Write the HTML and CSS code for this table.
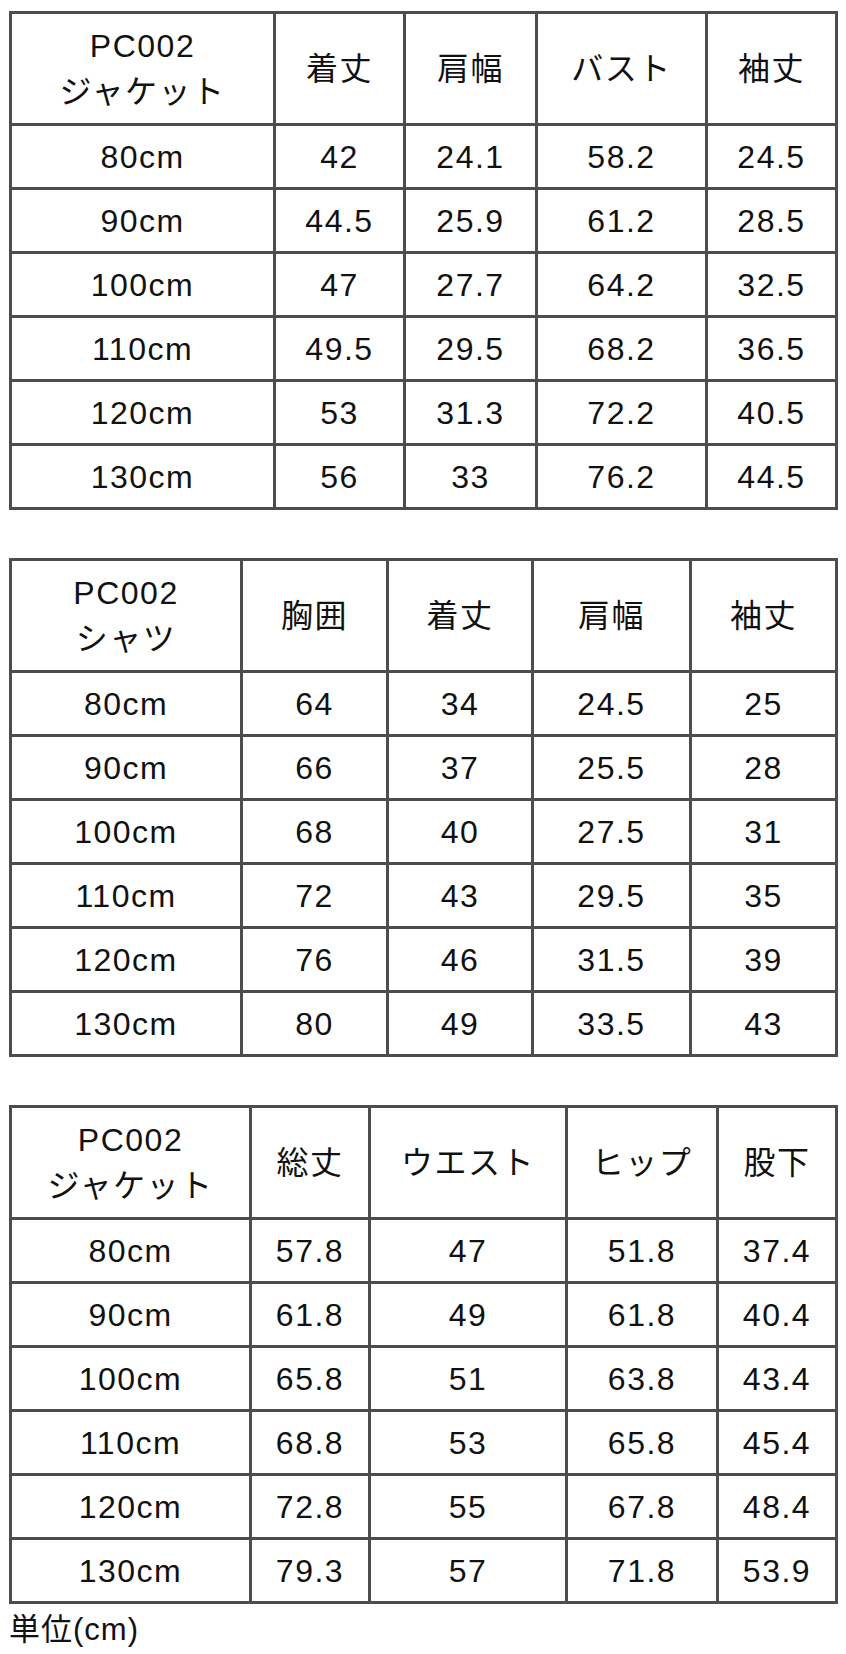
FILE: index.html
```html
<!DOCTYPE html>
<html lang="ja">
<head>
<meta charset="utf-8">
<title>PC002 サイズ表</title>
<link rel="stylesheet" href="styles.css">
</head>
<body>
<div class="page">
  <table class="size t1">
    <tr class="head"><th class="w1">PC002<br>ジャケット</th><th class="w2">着丈</th><th class="w3">肩幅</th><th class="w4">バスト</th><th class="w5">袖丈</th></tr>
    <tr><td>80cm</td><td>42</td><td>24.1</td><td>58.2</td><td>24.5</td></tr>
    <tr><td>90cm</td><td>44.5</td><td>25.9</td><td>61.2</td><td>28.5</td></tr>
    <tr><td>100cm</td><td>47</td><td>27.7</td><td>64.2</td><td>32.5</td></tr>
    <tr><td>110cm</td><td>49.5</td><td>29.5</td><td>68.2</td><td>36.5</td></tr>
    <tr><td>120cm</td><td>53</td><td>31.3</td><td>72.2</td><td>40.5</td></tr>
    <tr><td>130cm</td><td>56</td><td>33</td><td>76.2</td><td>44.5</td></tr>
  </table>

  <table class="size t2">
    <tr class="head"><th class="w1">PC002<br>シャツ</th><th class="w2">胸囲</th><th class="w3">着丈</th><th class="w4">肩幅</th><th class="w5">袖丈</th></tr>
    <tr><td>80cm</td><td>64</td><td>34</td><td>24.5</td><td>25</td></tr>
    <tr><td>90cm</td><td>66</td><td>37</td><td>25.5</td><td>28</td></tr>
    <tr><td>100cm</td><td>68</td><td>40</td><td>27.5</td><td>31</td></tr>
    <tr><td>110cm</td><td>72</td><td>43</td><td>29.5</td><td>35</td></tr>
    <tr><td>120cm</td><td>76</td><td>46</td><td>31.5</td><td>39</td></tr>
    <tr><td>130cm</td><td>80</td><td>49</td><td>33.5</td><td>43</td></tr>
  </table>

  <table class="size t3">
    <tr class="head"><th class="w1">PC002<br>ジャケット</th><th class="w2">総丈</th><th class="w3">ウエスト</th><th class="w4">ヒップ</th><th class="w5">股下</th></tr>
    <tr><td>80cm</td><td>57.8</td><td>47</td><td>51.8</td><td>37.4</td></tr>
    <tr><td>90cm</td><td>61.8</td><td>49</td><td>61.8</td><td>40.4</td></tr>
    <tr><td>100cm</td><td>65.8</td><td>51</td><td>63.8</td><td>43.4</td></tr>
    <tr><td>110cm</td><td>68.8</td><td>53</td><td>65.8</td><td>45.4</td></tr>
    <tr><td>120cm</td><td>72.8</td><td>55</td><td>67.8</td><td>48.4</td></tr>
    <tr><td>130cm</td><td>79.3</td><td>57</td><td>71.8</td><td>53.9</td></tr>
  </table>
  <p class="unit">単位(cm)</p>
</div>
</body>
</html>
```

FILE: styles.css
```css
html, body {
  margin: 0;
  padding: 0;
  background: #ffffff;
}

body {
  font-family: "Liberation Sans", "Noto Sans CJK JP", sans-serif;
  color: #111111;
}

.page {
  padding: 11px 8px 0 9px;
}

.size {
  width: 829px;
  table-layout: fixed;
  border-collapse: separate;
  border-spacing: 0;
  border-top: 3px solid #4d4d4d;
  border-left: 3px solid #4d4d4d;
  margin: 0 0 48px 0;
}

.size th,
.size td {
  box-sizing: border-box;
  padding: 0;
  border-right: 3px solid #4d4d4d;
  border-bottom: 3px solid #4d4d4d;
  text-align: center;
  vertical-align: middle;
  font-size: 32px;
  font-weight: normal;
  letter-spacing: 1.5px;
  line-height: 46px;
  color: #111111;
}

.size tr {
  height: 64px;
}

.size tr.head {
  height: 112px;
}

.t1 .w1 { width: 264px; }
.t1 .w2 { width: 130px; }
.t1 .w3 { width: 132px; }
.t1 .w4 { width: 170px; }
.t1 .w5 { width: 130px; }

.t2 .w1 { width: 231px; }
.t2 .w2 { width: 146px; }
.t2 .w3 { width: 145px; }
.t2 .w4 { width: 158px; }
.t2 .w5 { width: 146px; }

.t3 .w1 { width: 240px; }
.t3 .w2 { width: 119px; }
.t3 .w3 { width: 197px; }
.t3 .w4 { width: 151px; }
.t3 .w5 { width: 119px; }

.t3 {
  margin-bottom: 0;
}

.unit {
  margin: 4px 0 0 0;
  font-size: 31px;
  line-height: 44px;
  letter-spacing: 1px;
  color: #111111;
}
```
